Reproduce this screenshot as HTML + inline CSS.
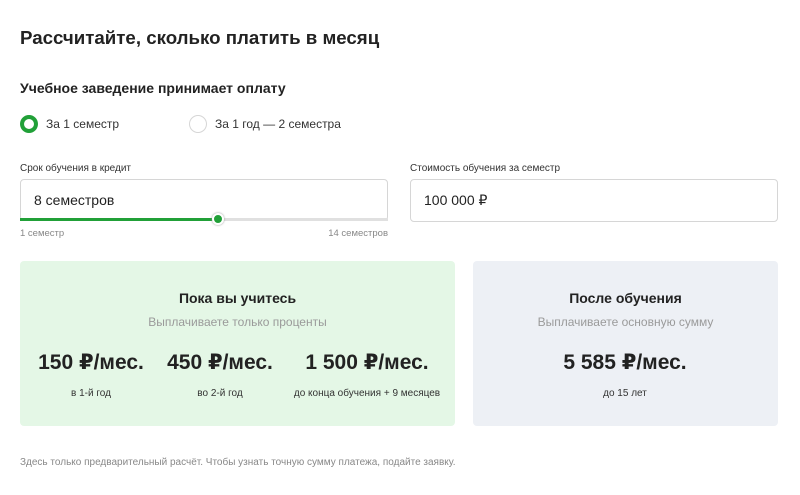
<!DOCTYPE html>
<html><head><meta charset="utf-8"><style>
body{margin:0;width:800px;height:495px;background:#fff;font-family:"Liberation Sans","DejaVu Sans",sans-serif;color:#222;position:relative;overflow:hidden}
.a{position:absolute;white-space:nowrap}
.box{position:absolute;border:1px solid #d6d6d6;border-radius:4px;background:#fff}
.card{position:absolute;border-radius:4px;text-align:center}
.t{position:absolute;left:0;right:0;font-size:14px;font-weight:bold;color:#222}
.s{position:absolute;left:0;right:0;font-size:12px;color:#9a9a9a}
.m{position:absolute;font-size:21px;font-weight:bold;transform:translateX(-50%);white-space:nowrap}
.c{position:absolute;font-size:10px;transform:translateX(-50%);white-space:nowrap;color:#333}
</style></head><body>
<div class="a" style="left:20px;top:27px;font-size:18.7px;font-weight:bold;color:#222">Рассчитайте, сколько платить в месяц</div>
<div class="a" style="left:20px;top:80px;font-size:14px;font-weight:bold">Учебное заведение принимает оплату</div>
<div class="a" style="left:20px;top:115px;width:10px;height:10px;border:4px solid #21a038;border-radius:50%"></div>
<div class="a" style="left:46px;top:117px;font-size:12px;color:#333">За 1 семестр</div>
<div class="a" style="left:189px;top:115px;width:16px;height:16px;border:1px solid #d6d6d6;border-radius:50%"></div>
<div class="a" style="left:215px;top:117px;font-size:12px;color:#333">За 1 год — 2 семестра</div>
<div class="a" style="left:20px;top:163px;font-size:10px;color:#333">Срок обучения в кредит</div>
<div class="box" style="left:20px;top:179px;width:366px;height:40px"></div>
<div class="a" style="left:34px;top:192px;font-size:14px;color:#222">8 семестров</div>
<div class="a" style="left:20px;top:218px;width:368px;height:3px;background:#e0e0e0"></div>
<div class="a" style="left:20px;top:218px;width:198px;height:3px;background:#21a038"></div>
<div class="a" style="left:212px;top:213px;width:8px;height:8px;background:#21a038;border:2px solid #fff;border-radius:50%;box-shadow:0 0 2px #999"></div>
<div class="a" style="left:20px;top:228px;font-size:9.5px;color:#888">1 семестр</div>
<div class="a" style="right:412px;top:228px;font-size:9.5px;color:#888">14 семестров</div>
<div class="a" style="left:410px;top:163px;font-size:10px;color:#333">Стоимость обучения за семестр</div>
<div class="box" style="left:410px;top:179px;width:366px;height:41px"></div>
<div class="a" style="left:424px;top:192px;font-size:14px;color:#222">100 000 ₽</div>
<div class="card" style="left:20px;top:261px;width:435px;height:165px;background:#e4f7e6">
<div class="t" style="top:29px">Пока вы учитесь</div>
<div class="s" style="top:54px">Выплачиваете только проценты</div>
<div class="m" style="left:71px;top:89px">150 ₽/мес.</div>
<div class="m" style="left:200px;top:89px">450 ₽/мес.</div>
<div class="m" style="left:347px;top:89px">1 500 ₽/мес.</div>
<div class="c" style="left:71px;top:127px">в 1-й год</div>
<div class="c" style="left:200px;top:127px">во 2-й год</div>
<div class="c" style="left:347px;top:127px">до конца обучения + 9 месяцев</div>
</div>
<div class="card" style="left:473px;top:261px;width:305px;height:165px;background:#edf0f5">
<div class="t" style="top:29px">После обучения</div>
<div class="s" style="top:54px">Выплачиваете основную сумму</div>
<div class="m" style="left:152px;top:89px">5 585 ₽/мес.</div>
<div class="c" style="left:152px;top:127px">до 15 лет</div>
</div>
<div class="a" style="left:20px;top:457px;font-size:10px;color:#888">Здесь только предварительный расчёт. Чтобы узнать точную сумму платежа, подайте заявку.</div>
</body></html>
